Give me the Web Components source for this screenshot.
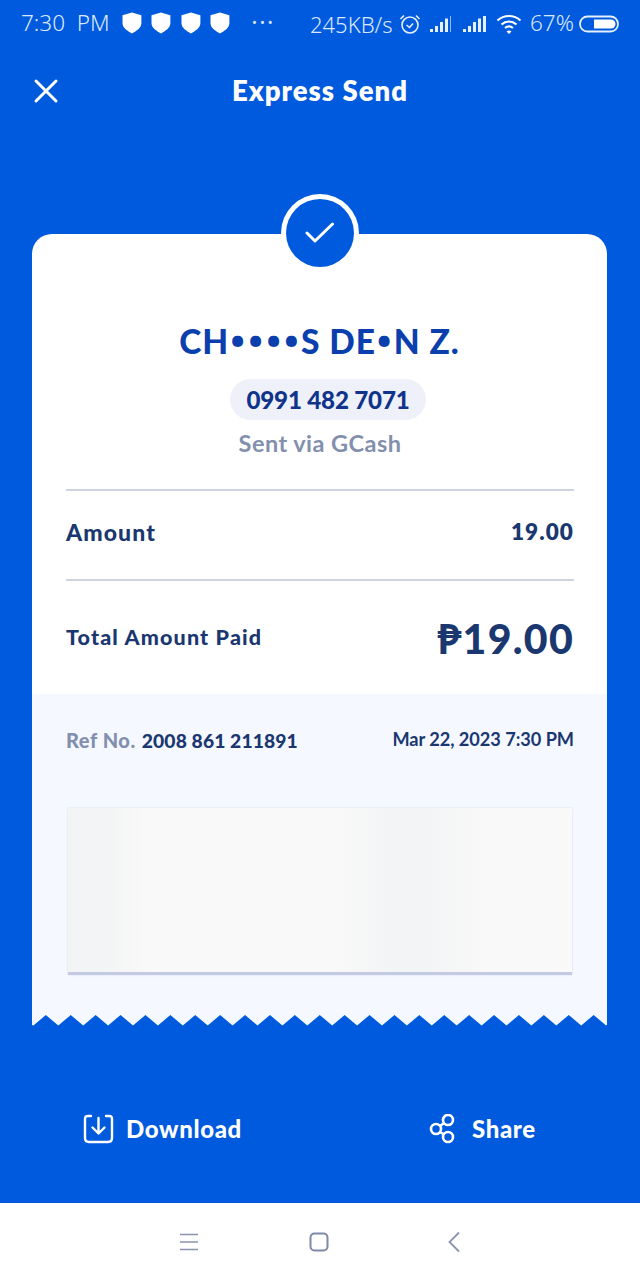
<!DOCTYPE html>
<html><head><meta charset="utf-8"><style>
html,body{margin:0;padding:0;background:#005ade}
body{width:640px;height:1280px;overflow:hidden;font-family:Lato,"Noto Sans",sans-serif}
</style></head><body>
<gc-app></gc-app>
<script>
function def(name,css,html){
  customElements.define(name,class extends HTMLElement{
    constructor(){super();const r=this.attachShadow({mode:'open'});r.innerHTML='<style>'+css+'</style>'+html;}
  });
}
const shield='<svg width="22" height="22" viewBox="0 0 22 22"><path d="M11 .5 20.500 3.200V11C20.500 16 15.500 19 11 21.500 6.500 19 1.500 16 1.500 11V3.200Z" fill="#fff"/></svg>';
const bars=(last)=>`<svg width="24" height="18" viewBox="0 0 24 18"><g fill="#e6effc"><rect x="0" y="14" width="3" height="3"/><rect x="5" y="11" width="3" height="6"/><rect x="10" y="7" width="3" height="10"/><rect x="15" y="3.500" width="3" height="13.500"/></g><rect x="20" y="1" width="${last?3:1}" height="16" fill="${last?'#e6effc':'#8fb8f0'}"/></svg>`;
def('gc-status',`:host{display:flex;align-items:center;height:46px;padding:1px 0 0 21px;color:#dbe8fb;font:300 22.500px/1 "Noto Sans",sans-serif;box-sizing:border-box}
.t{width:100px;white-space:pre;flex:none}.s{display:flex;gap:7.500px;transform:translateY(-1px);flex:none;width:110px}.d{margin-left:21px;width:35px;font-size:13px;font-weight:400;letter-spacing:3px;flex:none;transform:translateY(-1px)}
.n{margin-left:23px;width:89px;font-size:22px;letter-spacing:0;flex:none}.r{display:flex;align-items:center;flex:none}`,
`<span class="t">7:30  PM</span><span class="s">${shield+shield+shield+shield}</span><span class="d">•••</span>
<span class="n">245KB/s</span><span class="r"><svg width="22" height="22" viewBox="0 0 22 22" fill="none" stroke="#e6effc" stroke-width="1.600"><circle cx="11" cy="12" r="8"/><path d="M7.500 12l3 2.500 3.500-4M1.500 6 5 2.500M20.500 6 17 2.500"/></svg></span>
<span class="r" style="margin-left:9px">${bars(false)}</span><span class="r" style="margin-left:9px">${bars(true)}</span>
<span class="r" style="margin-left:9px"><svg width="26" height="22" viewBox="0 0 26 22" fill="none" stroke="#fff" stroke-width="2.200"><path d="M1.500 7.500C8 1.500 18 1.500 24.500 7.500M5.500 11.500C10 7.500 16 7.500 20.500 11.500M9 15C11.500 13 14.500 13 17 15"/><path d="M10.500 18.500 13 21l2.500-2.500C14 17 12 17 10.500 18.500Z" fill="#fff" stroke="none"/></svg></span>
<span style="margin-left:8px;flex:none">67%</span>
<span class="r" style="margin-left:5px"><svg width="40" height="18" viewBox="0 0 40 18"><rect x="1" y="1.500" width="38" height="15" rx="7.500" fill="none" stroke="#e6effc" stroke-width="1.800"/><path d="M15 4.500H32A4.500 4.500 0 0 1 32 13.500H15Z" fill="#fff"/></svg></span>`);
def('gc-header',`:host{display:flex;align-items:center;justify-content:center;height:90px;position:relative;color:#fff;font:800 27.500px/1 Lato,sans-serif;letter-spacing:1px;box-sizing:border-box}
svg{position:absolute;left:33px;top:32px}`,
`<svg width="26" height="26" viewBox="0 0 26 26" stroke="#fff" stroke-width="3" stroke-linecap="round"><path d="M3 3 23 23M23 3 3 23"/></svg><span>Express Send</span>`);
def('gc-row',`:host{display:flex;align-items:center;justify-content:space-between;color:#1a3770;box-sizing:content-box;flex:none}`,`<slot name="l"></slot><slot name="r"></slot>`);
def('gc-check',`:host{display:flex;align-items:center;justify-content:center;position:absolute;left:249px;top:-40px;width:78px;height:78px;border-radius:50%;background:#fff;box-sizing:border-box}
div{width:68px;height:68px;border-radius:50%;background:#005ade;display:flex;align-items:center;justify-content:center}`,
`<div><svg width="30" height="22" viewBox="0 0 30 22" fill="none" stroke="#fff" stroke-width="3" stroke-linecap="round" stroke-linejoin="round"><path d="M2 11 10 19 27.500 2"/></svg></div>`);
let z='M0 0H575V12';
for(let i=23;i>=0;i--){const x=1.400+i*24.900;z+=`L${x+12.450} 2L${x} 12.500`;}
z+='L0 12Z';
def('gc-edge',`:host{display:block;height:13px}svg{display:block}`,`<svg width="575" height="13" viewBox="0 0 575 13"><path d="${z}" fill="#f5f9ff"/></svg>`);
def('gc-card',`:host{display:block;position:relative;width:575px;margin:0 0 0 32px;font-family:Lato,sans-serif}
.top{background:#fff;border-radius:20px 20px 0 0;padding:89px 33px 0 34px;height:460px;box-sizing:border-box;display:flex;flex-direction:column;align-items:center;color:#1a3770}
.top>*{flex:none}
.name{font-size:33.500px;line-height:36px;height:36px;font-weight:900;color:#0b3fae;letter-spacing:.9px;white-space:nowrap;transform:translateX(-.5px)}
.name span{font-family:Roboto,sans-serif;font-size:44px;line-height:0;letter-spacing:1.700px;vertical-align:-4px}
.pill{margin-top:20px;height:41px;width:196px;justify-content:center;border-radius:21px;background:#eef1f9;color:#10348c;font-size:24.200px;font-weight:900;display:flex;align-items:center;letter-spacing:-.2px;transform:translateX(8px)}
.via{margin-top:10px;font-size:23.500px;line-height:26px;color:#8390ad;font-weight:700;letter-spacing:.45px}
.rows{align-self:stretch;margin-top:33px;border-top:2px solid #ccd3e3}
gc-row.a{height:81px;padding-bottom:7px;border-bottom:2px solid #ccd3e3}
gc-row.b{height:111px;padding-bottom:2px}
.lab{font-weight:900;font-size:23px;letter-spacing:1.100px}
.lab2{font-weight:900;font-size:21.500px;letter-spacing:1.150px}
.amt{font-size:22.500px;font-weight:800;letter-spacing:1.100px}
.big{font-size:41px;font-weight:900;letter-spacing:1.300px;transform:translateY(2px)}
.bottom{background:#f5f9ff;padding:33px 33px 0 34px;height:319px;box-sizing:border-box}
.meta{display:flex;justify-content:space-between;align-items:flex-start;color:#1a3770;height:81px}
.ref{font-size:19.300px;font-weight:900;line-height:26px;letter-spacing:.1px}.ref i{font-style:normal;color:#8390ad;margin-right:6px;font-size:20px;letter-spacing:.55px}
.dt{font-size:18.200px;font-weight:700;line-height:24px;letter-spacing:-.05px}
.ph{margin:0 0 0 2px;height:167px;width:504px;box-sizing:border-box;border-bottom:3px solid #c3cbe4;box-shadow:0 0 2px rgba(90,110,160,.22);background:linear-gradient(90deg,#f3f4f5 0,#f3f4f5 35px,#f9f9f9 85px,#f9f9f9 265px,#f3f4f5 325px,#f3f4f5 360px,#f9f9f9 420px,#f9f9f9 504px)}`,
`<gc-check></gc-check>
<div class="top"><div class="name">CH<span>••••</span>S DE<span>•</span>N Z.</div><div class="pill">0991 482 7071</div><div class="via">Sent via GCash</div>
<div class="rows"><gc-row class="a"><span slot="l" class="lab">Amount</span><span slot="r" class="amt">19.00</span></gc-row>
<gc-row class="b"><span slot="l" class="lab2">Total Amount Paid</span><span slot="r" class="big">₱19.00</span></gc-row></div></div>
<div class="bottom"><div class="meta"><div class="ref"><i>Ref No.</i>2008 861 211891</div><div class="dt">Mar 22, 2023 7:30 PM</div></div><div class="ph"></div></div>
<gc-edge></gc-edge>`);
def('gc-action',`:host{display:inline-flex;align-items:center;gap:12px;color:#fff;font:900 24px/1 Lato,sans-serif;letter-spacing:.65px}`,`<slot name="i"></slot><slot></slot>`);
def('gc-nav',`:host{display:flex;align-items:center;justify-content:center;height:77px;background:#fff;box-sizing:border-box}
svg{display:block}`,
`<svg width="20" height="18" viewBox="0 0 20 18" stroke="#8a94b0" stroke-width="1.700" fill="none" style="margin-right:110px"><path d="M1 1.500H19M1 9H19M1 16.500H19"/></svg>
<svg width="20" height="20" viewBox="0 0 20 20" fill="none" stroke="#7f89a8" stroke-width="2"><rect x="1.500" y="1.500" width="17" height="17" rx="4"/></svg>
<svg width="14" height="22" viewBox="0 0 14 22" fill="none" stroke="#8a94b0" stroke-width="1.800" style="margin-left:118px"><path d="M12 1.500 2.500 11 12 20.500"/></svg>`);
def('gc-app',`:host{display:flex;flex-direction:column;width:640px;height:1280px;background:#005ade;overflow:hidden}
.sp{height:98px;flex:none}.acts{display:flex;flex:1;align-items:flex-start;padding:88px 0 0 83px;box-sizing:border-box;min-height:0}
gc-card,gc-nav,gc-status,gc-header{flex:none}
.acts gc-action+gc-action{margin-left:186px;gap:16px}svg{display:block}`,
`<gc-status></gc-status><gc-header></gc-header><div class="sp"></div><gc-card></gc-card>
<div class="acts">
<gc-action><svg slot="i" width="31" height="30" viewBox="0 0 31 30" fill="none" stroke="#fff" stroke-width="2.400" stroke-linecap="round" stroke-linejoin="round"><path d="M8 2H5Q2 2 2 5V24Q2 28 6 28H25Q29 28 29 24V5Q29 2 26 2H23M15.500 4V19M9.500 13.500 15.500 19.500 21.500 13.500"/></svg>Download</gc-action>
<gc-action><svg slot="i" width="28" height="30" viewBox="0 0 28 30" fill="none" stroke="#fff" stroke-width="2.600"><circle cx="8" cy="15" r="5"/><circle cx="20" cy="6" r="5"/><circle cx="20" cy="23" r="5"/><path d="M12 12 16 9M12 18 16 20.500"/></svg>Share</gc-action>
</div><gc-nav></gc-nav>`);
</script></body></html>
